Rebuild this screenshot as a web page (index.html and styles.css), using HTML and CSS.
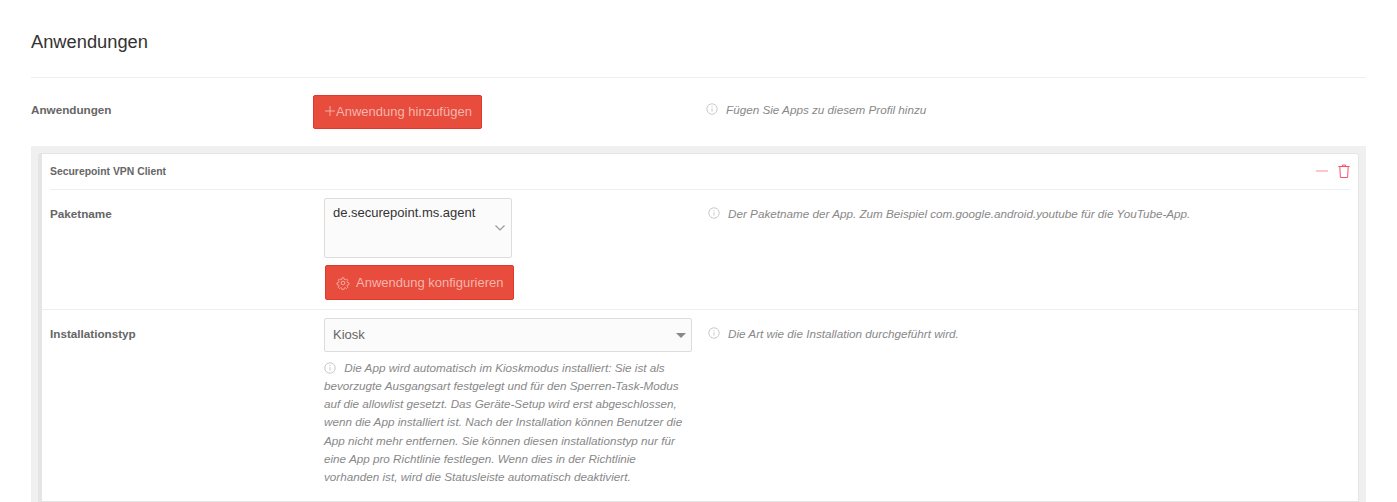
FILE: index.html
```html
<!DOCTYPE html>
<html lang="en">
<head>
    <meta charset="UTF-8">
    <title>Anwendungen</title>
    <link rel="stylesheet" href="styles.css">
</head>
<body>
    <h1 class="page-title">Anwendungen</h1>

    <div class="row top-row">
        <div class="row-label">Anwendungen</div>
        <div class="row-control">
            <button class="btn btn-add">
                <svg class="plus-icon" viewBox="0 0 12 12"><path d="M6 0v12M0 6h12"/></svg>Anwendung hinzufügen
            </button>
        </div>
        <div class="row-help">
            <svg class="info-icon" viewBox="0 0 12 12"><circle cx="6" cy="6" r="5.2"/><path d="M6 5.2v3.4M6 3.2v1"/></svg>
            <span>Fügen Sie Apps zu diesem Profil hinzu</span>
        </div>
    </div>

    <div class="app-list">
        <div class="app-card">
            <div class="app-header">
                <span class="app-title">Securepoint VPN Client</span>
                <span class="app-actions">
                    <svg class="minus-icon" viewBox="0 0 12 12"><path d="M0 6h12"/></svg>
                    <svg class="trash-icon" viewBox="0 0 12 14"><path d="M.5 2.5h11M1.8 2.5l.6 11h7.2l.6-11M4.5 2.2V1h3v1.2"/></svg>
                </span>
            </div>

            <div class="card-row first">
                <div class="card-label">Paketname</div>
                <div class="card-control">
                    <div class="tag-select">
                        <span>de.securepoint.ms.agent</span>
                        <svg class="chevron" viewBox="0 0 10 6"><path d="M.5.5 5 5 9.5.5"/></svg>
                    </div>
                    <button class="btn btn-config">
                        <svg class="gear-icon" viewBox="0 0 24 24"><circle cx="12" cy="12" r="3.2"/><path d="M10.3 2h3.4l.5 3 2 .9 2.6-1.7 2.4 2.4-1.7 2.6.9 2 3 .5v3.4l-3 .5-.9 2 1.7 2.6-2.4 2.4-2.6-1.7-2 .9-.5 3h-3.4l-.5-3-2-.9-2.6 1.7-2.4-2.4 1.7-2.6-.9-2-3-.5v-3.4l3-.5.9-2-1.7-2.6 2.4-2.4 2.6 1.7 2-.9z" transform="translate(1.2 1.2) scale(.9)"/></svg>
                        Anwendung konfigurieren
                    </button>
                </div>
                <div class="card-help">
                    <svg class="info-icon" viewBox="0 0 12 12"><circle cx="6" cy="6" r="5.2"/><path d="M6 5.2v3.4M6 3.2v1"/></svg>
                    <span>Der Paketname der App. Zum Beispiel com.google.android.youtube für die YouTube-App.</span>
                </div>
            </div>

            <div class="card-row">
                <div class="card-label">Installationstyp</div>
                <div class="card-control">
                    <div class="select-box">
                        <span>Kiosk</span>
                        <span class="select-arrow"></span>
                    </div>
                    <p class="select-note">
                        <svg class="info-icon" viewBox="0 0 12 12"><circle cx="6" cy="6" r="5.2"/><path d="M6 5.2v3.4M6 3.2v1"/></svg>
                        Die App wird automatisch im Kioskmodus installiert: Sie ist als bevorzugte Ausgangsart festgelegt und für den Sperren-Task-Modus auf die allowlist gesetzt. Das Geräte-Setup wird erst abgeschlossen, wenn die App installiert ist. Nach der Installation können Benutzer die App nicht mehr entfernen. Sie können diesen installationstyp nur für eine App pro Richtlinie festlegen. Wenn dies in der Richtlinie vorhanden ist, wird die Statusleiste automatisch deaktiviert.
                    </p>
                </div>
                <div class="card-help">
                    <svg class="info-icon" viewBox="0 0 12 12"><circle cx="6" cy="6" r="5.2"/><path d="M6 5.2v3.4M6 3.2v1"/></svg>
                    <span>Die Art wie die Installation durchgeführt wird.</span>
                </div>
            </div>
        </div>
    </div>
</body>
</html>
```

FILE: styles.css
```css
/* Base */
html, body {
    height: 502px;
    overflow: hidden;
}

body {
    margin: 0;
    padding: 0 31px;
    background-color: #fff;
    font-family: "Liberation Sans", Arial, sans-serif;
    color: #555;
}

.page-title {
    margin: 0;
    padding: 31px 0 24px;
    height: 22px;
    line-height: 22px;
    font-size: 18.3px;
    font-weight: 400;
    color: #333;
    border-bottom: 1px solid #eee;
}

/* Top row */
.row {
    display: flex;
}

.top-row {
    height: 68px;
    padding-top: 17px;
    box-sizing: border-box;
}

.row-label {
    width: 282px;
    padding-top: 8px;
    font-size: 11.7px;
    line-height: 14px;
    font-weight: 700;
    color: #666;
}

.row-control {
    width: 393px;
}

.row-help {
    padding-top: 8px;
}

.row-help, .card-help {
    display: flex;
    align-items: flex-start;
    font-size: 11.7px;
    line-height: 14px;
    font-style: italic;
    color: #888;
}

/* Buttons */
.btn {
    display: flex;
    align-items: center;
    padding: 0;
    border: 1px solid #e0392b;
    border-radius: 2px;
    background-color: #e74c3c;
    color: #f5b5ad;
    font-family: inherit;
    font-size: 13px;
}

.btn-add {
    width: 169px;
    height: 34px;
    padding-left: 11px;
    padding-bottom: 2px;
}

.btn-config {
    width: 189px;
    height: 35px;
    margin-left: 1px;
    padding-left: 10px;
}

.plus-icon {
    width: 10px;
    height: 10px;
    margin-right: 1px;
    fill: none;
    stroke: #f5b5ad;
    stroke-width: 1.1;
}

.gear-icon {
    width: 14px;
    height: 14px;
    margin-right: 6px;
    fill: none;
    stroke: #f5b5ad;
    stroke-width: 1.6;
}

.info-icon {
    flex: none;
    width: 12px;
    height: 12px;
    margin-right: 8px;
    fill: none;
    stroke: #bbb;
    stroke-width: .8;
}

/* App list */
.app-list {
    height: 356px;
    padding: 7px 7px 0 7px;
    box-sizing: border-box;
    background-color: #f0f0f0;
}

.app-card {
    height: 349px;
    box-sizing: border-box;
    background-color: #fff;
    border-left: 4px solid #e5e5e5;
    border-top: 1px solid #e5e5e5;
    border-right: 1px solid #e5e5e5;
    border-bottom: 1px solid #e5e5e5;
    border-radius: 3px 3px 0 0;
}

.app-header {
    display: flex;
    align-items: center;
    justify-content: space-between;
    height: 35px;
    margin: 0 8px;
    border-bottom: 1px solid #eee;
}

.app-title {
    margin-bottom: 1px;
    font-size: 10.4px;
    font-weight: 700;
    color: #666;
}

.app-actions {
    display: flex;
    align-items: center;
    gap: 10px;
    margin-bottom: 1px;
}

.minus-icon {
    width: 12px;
    height: 12px;
    fill: none;
    stroke: #fa8f8f;
    stroke-width: 1;
}

.trash-icon {
    width: 12px;
    height: 14px;
    fill: none;
    stroke: #f2536b;
    stroke-width: 1;
}

/* Card rows */
.card-row {
    display: flex;
    border-top: 1px solid #eee;
    padding: 8px 8px 0;
}

.card-row.first {
    height: 111px;
    border-top: 0;
    border-bottom: 0;
}

.card-label {
    width: 274px;
    padding-top: 9px;
    font-size: 11.7px;
    line-height: 14px;
    font-weight: 700;
    color: #666;
}

.card-control {
    width: 368px;
}

.card-help {
    margin-left: 16px;
    padding-top: 9px;
}

.tag-select {
    position: relative;
    width: 188px;
    height: 60px;
    box-sizing: border-box;
    padding: 6px 8px;
    margin-bottom: 7px;
    border: 1px solid #ddd;
    border-radius: 2px;
    background-color: #fbfbfb;
    font-size: 13px;
    line-height: 16px;
    color: #333;
}

.chevron {
    position: absolute;
    right: 6px;
    top: 26px;
    width: 10px;
    height: 6px;
    fill: none;
    stroke: #999;
    stroke-width: 1.2;
}

.select-box {
    display: flex;
    align-items: center;
    justify-content: space-between;
    height: 34px;
    box-sizing: border-box;
    padding: 0 5px 2px 8px;
    border: 1px solid #ddd;
    border-radius: 2px;
    background-color: #fbfbfb;
    font-size: 13px;
    color: #666;
}

.select-arrow {
    width: 0;
    height: 0;
    margin-top: 2px;
    border-left: 5px solid transparent;
    border-right: 5px solid transparent;
    border-top: 5px solid #888;
}

.select-note {
    margin: 6.8px 0 0;
    width: 368px;
    font-size: 11.7px;
    line-height: 18.2px;
    font-style: italic;
    color: #888;
}

.select-note .info-icon {
    vertical-align: -2px;
    margin-right: 5px;
}
```
